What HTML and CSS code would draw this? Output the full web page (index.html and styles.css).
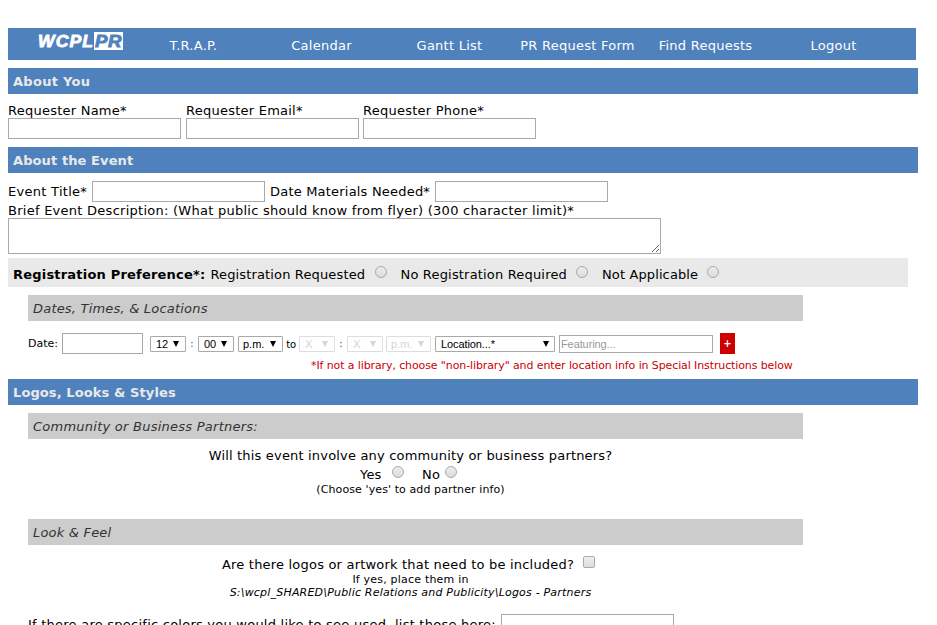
FILE: index.html
```html
<!DOCTYPE html>
<html lang="en">
<head>
<meta charset="utf-8">
<title>PR Request Form</title>
<link rel="stylesheet" href="styles.css">
</head>
<body>
<nav class="nav">
  <a class="logo"><svg width="88" height="22" viewBox="0 0 88 22">
    <rect x="57" y="3" width="29" height="18" fill="#fff"/>
    <text class="logo-text logo-light" x="1" y="18" textLength="56" lengthAdjust="spacingAndGlyphs">WCPL</text>
    <text class="logo-text logo-blue" x="58" y="18" textLength="27" lengthAdjust="spacingAndGlyphs">PR</text>
  </svg></a>
  <a>T.R.A.P.</a><a>Calendar</a><a>Gantt List</a><a>PR Request Form</a><a>Find Requests</a><a>Logout</a>
</nav>

<h2 class="section"><span class="t-you">About You</span></h2>
<div class="contact">
  <label><span>Requester Name*</span><input class="field"></label>
  <label><span>Requester Email*</span><input class="field"></label>
  <label><span>Requester Phone*</span><input class="field"></label>
</div>

<h2 class="section"><span class="t-event">About the Event</span></h2>
<div class="event">
  <span class="event-title">Event Title*</span><input class="field">
  <span class="event-date">Date Materials Needed*</span><input class="field">
</div>
<div class="desc"><span>Brief Event Description: (What public should know from flyer) (300 character limit)*</span></div>
<textarea class="area"></textarea>
<div class="reg">
  <b>Registration Preference*:</b>
  <span class="reg-a">Registration Requested</span><i class="radio"></i>
  <span class="reg-b">No Registration Required</span><i class="radio"></i>
  <span class="reg-c">Not Applicable</span><i class="radio"></i>
</div>

<h3 class="sub"><span class="t-dates">Dates, Times, &amp; Locations</span></h3>
<div class="when">
  <span class="date-label">Date:</span><input class="field date">
  <span class="pick w36">12<i class="arrow"></i></span><span class="sep">:</span>
  <span class="pick w36">00<i class="arrow"></i></span>
  <span class="pick w45 after">p.m.<i class="arrow"></i></span><span class="to">to</span>
  <span class="pick w36 off">X<i class="arrow"></i></span><span class="sep">:</span>
  <span class="pick w36 off">X<i class="arrow"></i></span>
  <span class="pick w45 off near">p.m.<i class="arrow"></i></span>
  <span class="pick w120">Location...*<i class="arrow"></i></span>
  <input class="featuring" placeholder="Featuring...">
  <span class="add">+</span>
</div>
<div class="hint"><span>*If not a library, choose "non-library" and enter location info in Special Instructions below</span></div>

<h2 class="section tight"><span class="t-logos">Logos, Looks &amp; Styles</span></h2>
<h3 class="sub"><span class="t-partners">Community or Business Partners:</span></h3>
<div class="center partners">
  <div class="ask"><span class="q1">Will this event involve any community or business partners?</span></div>
  <div class="yesno"><span class="yes">Yes</span><i class="radio"></i><span class="no">No</span><i class="radio"></i></div>
  <div class="small"><span class="s1">(Choose 'yes' to add partner info)</span></div>
</div>
<h3 class="sub look"><span class="t-look">Look &amp; Feel</span></h3>
<div class="center art">
  <div class="ask"><span class="q2">Are there logos or artwork that need to be included?</span><i class="check"></i></div>
  <div class="small"><span class="s2">If yes, place them in</span></div>
  <div class="small path"><span class="s3">S:\wcpl_SHARED\Public Relations and Publicity\Logos - Partners</span></div>
</div>
<div class="colors"><span>If there are specific colors you would like to see used, list those here:</span><input class="field"></div>
</body>
</html>
```
FILE: styles.css
```css
* { box-sizing: border-box; }
html { height: 625px; overflow: hidden; }
body { margin: 0; padding: 28px 8px 0; height: 625px; overflow: hidden; background: #fff; color: #000; font: 13px/16px "DejaVu Sans", Verdana, sans-serif; letter-spacing: .2px; white-space: nowrap; }
.nav { display: grid; grid-template-columns: 121.5px repeat(6, 128px); width: 908px; height: 32px; background: #4f81bd; color: #fff; text-align: center; line-height: 35px; letter-spacing: .25px; }
.logo { display: block; padding-left: 21px; line-height: 0; }
.logo svg { display: block; margin-top: 1px; margin-left: 8px; overflow: visible; }
.logo-text { font: italic bold 16.5px "Liberation Sans", Arial, sans-serif; stroke-width: .8px; }
.logo-light { fill: #fff; stroke: #fff; letter-spacing: 1px; }
.logo-blue { fill: #4f81bd; stroke: #4f81bd; letter-spacing: .5px; }
.section { margin: 8px 0; width: 910px; height: 26px; padding-left: 5px; background: #4f81bd; color: #e9e9e9; font-size: 13px; line-height: 27px; }
.t-you { letter-spacing: .3px; }
.t-event, .t-logos { letter-spacing: .1px; }
.tight { margin-top: 4px; }
.field { display: block; width: 173px; height: 21px; margin: 0; padding: 1px; border: 1px solid #a9a9a9; background: #fff; flex: none; }
.contact { display: flex; gap: 5px; height: 37px; letter-spacing: .24px; }
.contact label { display: block; width: 173px; }
.contact label:last-child { margin-left: -1px; }
.contact span { display: block; height: 16px; line-height: 17px; }
.event { display: flex; height: 21px; line-height: 21px; }
.event-title { width: 84px; letter-spacing: .28px; }
.event-date { width: 170px; padding-left: 5px; }
.desc { height: 16px; line-height: 17px; letter-spacing: .26px; }
.area { display: block; width: 653px; height: 36px; margin: 0; border: 1px solid #a9a9a9; }
.reg { display: flex; margin-top: 4px; width: 900px; height: 29px; padding-left: 5px; background: #e9e9e9; line-height: 33px; }
.reg b { width: 197px; }
.reg-a { width: 165px; letter-spacing: .14px; padding-left: .5px; }
.reg-b { width: 188px; padding-left: 12.5px; letter-spacing: .18px; }
.reg-c { width: 118px; padding-left: 13px; letter-spacing: .12px; }
.radio { flex: none; width: 12px; height: 12px; border: 1px solid #aaa; border-radius: 50%; background: linear-gradient(#ececec, #dcdcdc); }
.reg .radio { margin: 8px 1px 0 0; }
.sub { margin: 8px 0 0 20px; width: 775px; height: 26px; padding-left: 5px; background: #ccc; color: #333; font-size: 13px; font-weight: normal; font-style: italic; line-height: 27px; }
.t-partners { letter-spacing: .25px; }
.when { display: flex; margin: 12px 0 0 20px; height: 21px; line-height: 22px; font-size: 11px; }
.date-label { width: 34px; letter-spacing: 0; }
.date { width: 81px; margin-right: 7px; }
.pick { display: flex; flex: none; justify-content: space-between; align-items: center; height: 16px; margin-top: 3px; padding: 0 6px 0 5px; border: 1px solid #a9a9a9; border-radius: 1px; background: #fff; font: 11px/14px "Liberation Sans", Arial, sans-serif; letter-spacing: 0; }
.w36 { width: 36px; }
.w45 { width: 45px; padding-left: 4px; }
.after { margin-left: 4px; }
.near { margin: 3px 4px 0 3px; }
.w120 { width: 120px; padding-right: 5px; letter-spacing: -.1px; }
.off { border-color: #ddd; color: #d4d4d4; }
.arrow { width: 6px; height: 6px; background: currentColor; clip-path: polygon(0 0, 100% 0, 50% 100%); }
.sep { width: 12px; text-align: center; color: #467; }
.to { width: 16px; text-align: center; font-size: 10px; line-height: 23px; letter-spacing: -.3px; }
.featuring { width: 154px; height: 18px; margin: 2px 7px 0 4px; padding: 1px 1px; border: 1px solid #a9a9a9; font: 11px "Liberation Sans", Arial, sans-serif; letter-spacing: -.1px; }
.featuring::placeholder { color: #999; }
.add { width: 15px; background: #c00; color: #fff; text-align: center; font-weight: bold; font-size: 10px; }
.hint { margin-left: 303px; height: 17px; margin-top: 4px; line-height: 16px; color: #c00; font-size: 11px; letter-spacing: -.11px; }
.center { width: 765px; margin-left: 20px; text-align: center; }
.partners { padding-top: 8px; height: 80px; }
.ask { display: flex; justify-content: center; line-height: 17px; height: 18px; }
.q1 { letter-spacing: .18px; }
.yesno { display: flex; height: 18px; line-height: 20px; padding-left: 332px; }
.yesno .radio { margin: 1px 1px 0 0; }
.yes { width: 32px; text-align: left; }
.no { width: 40px; padding-left: 17px; text-align: left; }
.small { height: 13px; line-height: 14px; font-size: 11px; }
.s1 { letter-spacing: .1px; }
.look { margin-top: 0; }
.art { padding-top: 11px; height: 61px; }
.art .ask { height: 17px; padding-right: 4px; }
.check { width: 12px; height: 12px; margin: 0 0 0 9px; border: 1px solid #aaa; border-radius: 2px; background: linear-gradient(#eee, #ddd); }
.path { font-style: italic; }
.colors { display: flex; margin: 8px 0 0 20px; line-height: 21px; letter-spacing: .24px; }
.colors span { width: 473px; }
```
